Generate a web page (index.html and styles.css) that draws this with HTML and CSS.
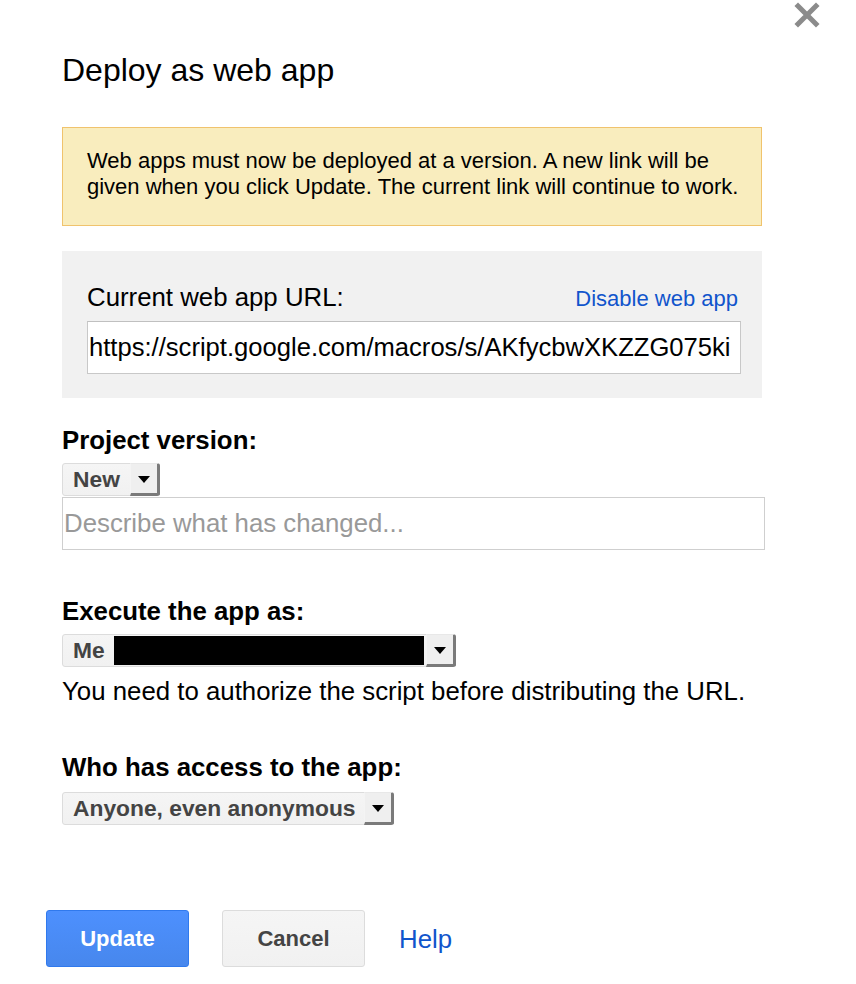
FILE: index.html
```html
<!DOCTYPE html>
<html>
<head>
<meta charset="utf-8">
<link rel="stylesheet" href="styles.css">
</head>
<body>
<div class="dialog">
  <button class="close" aria-label="Close">
    <svg width="26" height="26" viewBox="0 0 26 26"><path d="M4 4 L22 22 M22 4 L4 22" stroke="#777" stroke-width="5" stroke-linecap="square" fill="none"/></svg>
  </button>
  <h1 class="title">Deploy as web app</h1>
  <div class="notice">Web apps must now be deployed at a version. A new link will be given when you click Update. The current link will continue to work.</div>
  <div class="urlbox">
    <div class="urlhead">
      <span class="label">Current web app URL:</span>
      <a class="link small">Disable web app</a>
    </div>
    <div class="urlinput">https://script.google.com/macros/s/AKfycbwXKZZG075ki</div>
  </div>

  <div class="field first">
    <div class="flabel">Project version:</div>
    <div class="select sel-new"><span class="stext">New</span><span class="arrow"><i></i></span></div>
    <div class="desc">Describe what has changed...</div>
  </div>

  <div class="field">
    <div class="flabel">Execute the app as:</div>
    <div class="select sel-me"><span class="stext">Me</span><span class="redact"></span><span class="arrow"><i></i></span></div>
    <div class="note">You need to authorize the script before distributing the URL.</div>
  </div>

  <div class="field">
    <div class="flabel">Who has access to the app:</div>
    <div class="select sel-any"><span class="stext">Anyone, even anonymous</span><span class="arrow"><i></i></span></div>
  </div>

  <div class="buttons">
    <button class="btn primary">Update</button>
    <button class="btn">Cancel</button>
    <a class="link help">Help</a>
  </div>
</div>
</body>
</html>
```
FILE: styles.css
```css
* { box-sizing: border-box; }
html, body { margin: 0; padding: 0; background: #fff; }
body {
  font-family: "Liberation Sans", Arial, Helvetica, sans-serif;
  color: #000;
  width: 856px;
  height: 984px;
  overflow: hidden;
}
.dialog {
  position: relative;
  padding: 51px 0 0 62px;
}
.close {
  position: absolute;
  top: 2px;
  right: 36px;
  width: 26px;
  height: 26px;
  padding: 0;
  border: 0;
  background: transparent;
  opacity: 0.85;
  filter: blur(0.6px);
}
.title {
  margin: 0;
  font-weight: normal;
  font-size: 32px;
  line-height: 38px;
  color: #000;
}
.notice {
  margin-top: 38px;
  width: 700px;
  background: #f9edbe;
  border: 1px solid #f0c36d;
  padding: 20px 20px 25px 24px;
  font-size: 22px;
  line-height: 26px;
}
.urlbox {
  margin-top: 25px;
  width: 700px;
  background: #f1f1f1;
  padding: 31px 21px 24px 25px;
}
.urlhead {
  display: flex;
  justify-content: space-between;
  align-items: baseline;
  height: 30px;
}
.label {
  font-size: 25.8px;
  line-height: 30px;
}
.link {
  color: #1155cc;
  text-decoration: none;
}
.small {
  font-size: 22px;
  line-height: 30px;
  margin-right: 3px;
}
.urlinput {
  margin-top: 9px;
  width: 654px;
  height: 53px;
  background: #fff;
  border: 1px solid #c8c8c8;
  border-top-color: #c0c0c0;
  padding: 0 0 0 1px;
  font-size: 25.6px;
  line-height: 51px;
  white-space: nowrap;
  overflow: hidden;
}
.field { margin-top: 46px; }
.field.first { margin-top: 27px; }
.flabel {
  font-weight: bold;
  font-size: 25.8px;
  line-height: 30px;
}
.select {
  margin-top: 8px;
  display: flex;
  align-items: center;
  height: 33px;
  border: 1px solid #dcdcdc;
  border-radius: 3px;
  background: linear-gradient(#f5f5f5, #f1f1f1);
  color: #444;
  font-weight: bold;
  font-size: 22.8px;
  padding-left: 10px;
}
.stext { line-height: 31px; }
.sel-new { width: 98px; }
.sel-me { width: 394px; }
.sel-any { width: 332px; margin-top: 10px; }
.redact {
  display: block;
  width: 310px;
  height: 29px;
  background: #000;
  margin-left: 9px;
}
.arrow {
  margin-left: auto;
  width: 30px;
  height: 33px;
  margin-top: -1px;
  margin-bottom: -1px;
  margin-right: -1px;
  border-top: 1px solid #e8e8e8;
  border-left: 1px solid #f4f4f4;
  border-right: 3px solid #7a7a7a;
  border-bottom: 3px solid #7a7a7a;
  border-radius: 0 3px 3px 0;
  background: #efefef;
  display: flex;
  align-items: center;
  justify-content: center;
}
.arrow i {
  display: block;
  width: 0;
  height: 0;
  border-left: 6px solid transparent;
  border-right: 6px solid transparent;
  border-top: 7px solid #000;
  margin-top: 1px;
  margin-right: 1px;
}
.desc {
  margin-top: 1px;
  width: 703px;
  height: 53px;
  border: 1px solid #cfcfcf;
  padding-left: 1px;
  font-size: 25.8px;
  line-height: 51px;
  color: #999;
}
.note {
  margin-top: 9px;
  font-size: 25.8px;
  line-height: 30px;
}
.buttons {
  margin-top: 85px;
  margin-left: -16px;
  display: flex;
  align-items: center;
}
.btn {
  width: 143px;
  height: 57px;
  margin-right: 33px;
  border: 1px solid #dcdcdc;
  border-radius: 3px;
  background: linear-gradient(#f5f5f5, #f1f1f1);
  color: #444;
  font-family: "Liberation Sans", Arial, sans-serif;
  font-weight: bold;
  font-size: 22px;
  padding: 0;
}
.btn.primary {
  background: linear-gradient(#4d90fe, #4787ed);
  border-color: #3079ed;
  color: #fff;
}
.help {
  margin-left: 1px;
  font-size: 25.8px;
  line-height: 30px;
}
```
